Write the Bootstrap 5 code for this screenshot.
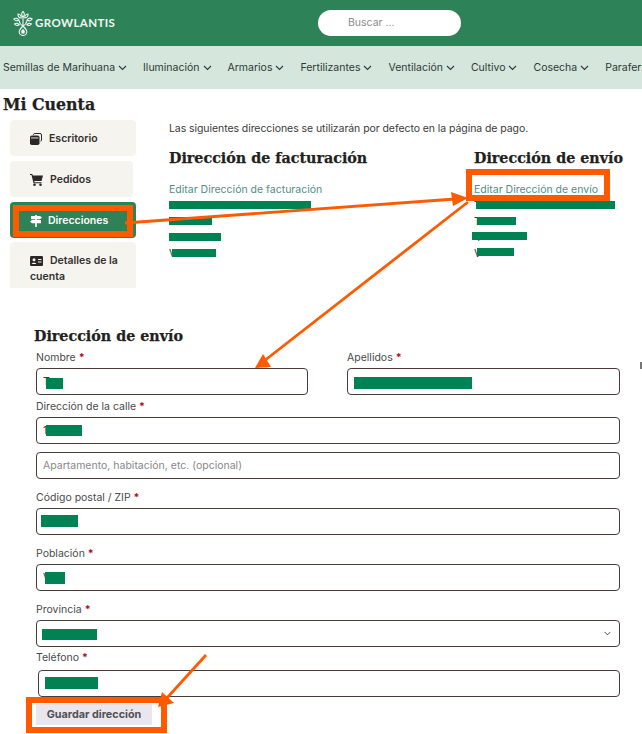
<!DOCTYPE html>
<html lang="es">
<head>
    <meta charset="UTF-8">
    <meta name="viewport" content="width=device-width, initial-scale=1.0">
    <title>Mi Cuenta - Growlantis</title>
    <link href="https://cdn.jsdelivr.net/npm/bootstrap@5.3.3/dist/css/bootstrap.min.css" rel="stylesheet">
    <style>
        html, body { overflow: hidden; }
        body {
            position: relative;
            height: 734px;
            font-family: "Inter", "Liberation Sans", sans-serif;
            font-size: 10.5px;
            line-height: 16px;
            color: #3d3a3a;
            background: #fff;
        }
        .top-bar { height: 46px; background: #2e8257; padding-left: 13px; }
        .logo-text { width: 83px; margin-left: 2px; color: #f2f7f4; font-family: "Lato", sans-serif; font-weight: 700; font-size: 11.5px; letter-spacing: .4px; }
        .search-pill { width: 143px; height: 26px; margin-left: 200px; padding-left: 30px; background: #fff; border-radius: 13px; color: #8d8d8d; line-height: 26px; }
        .menu-bar { height: 43px; background: #d5e6dc; padding-left: 3px; gap: 16px; white-space: nowrap; overflow: hidden; }
        .menu-bar a { color: #2f3a36; text-decoration: none; font-size: 10.5px; }
        .menu-bar svg { margin-left: 3px; }
        .serif-title { margin: 0; font-family: "DejaVu Serif", "Liberation Serif", serif; font-weight: 700; color: #231f1c; -webkit-text-stroke: .25px #231f1c; }
        .page-title { font-size: 15.8px; line-height: 22px; margin: 5px 0 4px 3px; }
        .side-menu { width: 126px; margin-left: 10px; gap: 5px; }
        .side-item { height: 36px; padding: 2px 0 0 20px; background: #f5f4ef; border-radius: 4px; color: #34302e; font-weight: 600; }
        .side-item svg { margin-right: 7px; flex: none; }
        .side-narrow { width: 123px; }
        .side-active { background: #2e8257; color: #fff; }
        .side-active svg { margin-right: 6px; }
        .side-tall { display: block; height: 46px; padding: 11px 0 0 20px; border-radius: 4px 4px 0 0; margin-top: -1px; }
        .side-tall svg { vertical-align: -2px; margin-right: 7px; }
        .side-tall span { display: block; }
        .account-main { margin-left: 33px; padding-top: 1px; }
        .intro-line { letter-spacing: -.07px; }
        .address-box { width: 305px; }
        .address-box + .address-box { width: 150px; }
        .section-title { font-size: 14.3px; line-height: 20px; margin: 11px 0 14px; white-space: nowrap; }
        .edit-link { color: #4e8f86; text-decoration: none; display: block; }
        .form-box { margin: 37px 22px 0 36px; }
        .form-heading { font-size: 14.3px; line-height: 22px; margin: 0 0 3px -2px; }
        .field-label { display: block; height: 14px; line-height: 16px; margin: 0 0 4px; color: #4a4a4a; }
        .field-label b { color: #a80f22; font-weight: 700; }
        .field-input.form-control, .field-input.form-select {
            height: 27px; min-height: 0; padding: 0 6px; font-size: 10.5px; line-height: 25px;
            color: #3d3a3a; border: 1px solid #4a3a3a; border-radius: 4px;
        }
        .field-input.form-select { background-size: 9px 7px; background-position: right 7px center; }
        .field-input::placeholder { color: #888; }
        .form-gap { gap: 39px; margin-bottom: 4px; }
        .form-half { flex: 0 0 272px; }
        .gap-sm { margin-bottom: 8px; }
        .gap-md { margin-bottom: 11px; }
        .gap-xs { margin-bottom: 3px; }
        .phone-label { margin-bottom: 6px; }
        .phone-input { width: 582px; margin: 0 0 7px 2px; }
        .save-btn.btn { width: 116px; height: 21px; padding: 0; font-size: 10.8px; font-weight: 700; line-height: 21px; color: #515151; background: #e9e6ed; border: 0; border-radius: 0; }
        .mark-layer { position: absolute; top: 0; left: 0; pointer-events: none; }
    </style>
</head>
<body>

<!-- Header -->
<header class="top-bar d-flex align-items-center">
    <svg width="20" height="26" viewBox="0 0 20 26" fill="none" stroke="#f2f7f4" stroke-width="1.1">
        <path d="M10 1.5c1.8 1.6 1.8 4 0 5.6-1.8-1.6-1.8-4 0-5.6zM5 4c2.2.2 3.4 1.8 3.2 4C6 7.800 4.800 6.200 5 4zM15 4c-2.200.2-3.400 1.800-3.200 4 2.200-.2 3.400-1.800 3.200-4zM.8 9c1.800-1.200 4-.8 5.200 1-1.800 1.200-4 .8-5.200-1zM19.200 9c-1.800-1.200-4-.8-5.200 1 1.800 1.200 4 .8 5.200-1zM1.500 14c1.600-1.200 3.600-.8 4.700.8-1.600 1.200-3.600.8-4.700-.8zM18.500 14c-1.600-1.200-3.600-.8-4.700.8 1.600 1.200 3.600.8 4.700-.8z"/>
        <path d="M10 7v8M6 10.500c.5 3 2 4.500 4 5.500 2-1 3.500-2.500 4-5.500"/>
        <path d="M10 16c2.500 2.500 3.800 4 3.800 5.700a3.800 3.800 0 0 1-7.600 0C6.200 20 7.500 18.500 10 16z"/>
        <path d="M10 19c1.200 1.200 1.900 2 1.900 2.900a1.900 1.900 0 0 1-3.800 0c0-.9.700-1.700 1.900-2.900z" fill="#f2f7f4" stroke="none"/>
    </svg>
    <span class="logo-text">GROWLANTIS</span>
    <div class="search-pill">Buscar ...</div>
</header>

<!-- Menu -->
<nav class="menu-bar d-flex align-items-center">
    <a href="#">Semillas de Marihuana<svg width="9" height="6" viewBox="0 0 9 6" fill="none" stroke="#2f3a36" stroke-width="1.100"><path d="M1 1l3.500 3.500L8 1"/></svg></a>
    <a href="#">Iluminación<svg width="9" height="6" viewBox="0 0 9 6" fill="none" stroke="#2f3a36" stroke-width="1.100"><path d="M1 1l3.500 3.500L8 1"/></svg></a>
    <a href="#">Armarios<svg width="9" height="6" viewBox="0 0 9 6" fill="none" stroke="#2f3a36" stroke-width="1.100"><path d="M1 1l3.500 3.500L8 1"/></svg></a>
    <a href="#">Fertilizantes<svg width="9" height="6" viewBox="0 0 9 6" fill="none" stroke="#2f3a36" stroke-width="1.100"><path d="M1 1l3.500 3.500L8 1"/></svg></a>
    <a href="#">Ventilación<svg width="9" height="6" viewBox="0 0 9 6" fill="none" stroke="#2f3a36" stroke-width="1.100"><path d="M1 1l3.500 3.500L8 1"/></svg></a>
    <a href="#">Cultivo<svg width="9" height="6" viewBox="0 0 9 6" fill="none" stroke="#2f3a36" stroke-width="1.100"><path d="M1 1l3.500 3.500L8 1"/></svg></a>
    <a href="#">Cosecha<svg width="9" height="6" viewBox="0 0 9 6" fill="none" stroke="#2f3a36" stroke-width="1.100"><path d="M1 1l3.500 3.500L8 1"/></svg></a>
    <a href="#">Parafernalia</a>
</nav>

<h1 class="serif-title page-title">Mi Cuenta</h1>

<!-- Account -->
<div class="d-flex">
    <div class="side-menu d-flex flex-column flex-shrink-0">
        <div class="side-item d-flex align-items-center">
            <svg width="12" height="12" viewBox="0 0 12 12"><path d="M3.500 2V1.500A1.300 1.300 0 0 1 4.800.5H10a1.500 1.500 0 0 1 1.500 1.500v5a1.300 1.300 0 0 1-1 1.200" fill="none" stroke="#2b2726"/><rect y="2.500" width="9.500" height="9.500" rx="1.800" fill="#2b2726"/><rect x="1" y="4.500" width="7.500" height=".9" fill="#f5f4ef"/></svg>
            Escritorio
        </div>
        <div class="side-item side-narrow d-flex align-items-center">
            <svg width="13" height="12" viewBox="0 0 13 12" fill="#2b2726"><path d="M0 0h2.300l.5 1.500H13l-1.500 5.500H4.200l.3 1.200h7v1.100H3.500L1.500 1.100H0z"/><circle cx="4.500" cy="10.700" r="1.300"/><circle cx="10.500" cy="10.700" r="1.300"/></svg>
            Pedidos
        </div>
        <div class="side-item side-active d-flex align-items-center">
            <svg width="12" height="12" viewBox="0 0 12 12" fill="#fff"><rect x="5.200" width="1.600" height="12"/><path d="M1 1h9l2 1.600L10 4.200H1zM11 5H2L0 6.600 2 8.200h9z"/></svg>
            Direcciones
        </div>
        <div class="side-item side-tall">
            <svg width="13" height="10" viewBox="0 0 13 10"><rect width="13" height="10" rx="1.200" fill="#2b2726"/><circle cx="4" cy="3.700" r="1.500" fill="#f5f4ef"/><path d="M1.700 8c.2-1.700 4.400-1.700 4.600 0zM8 3h3.500v1H8zM8 5.500h3.500v1H8z" fill="#f5f4ef"/></svg>Detalles de la
            <span>cuenta</span>
        </div>
    </div>
    <div class="account-main">
        <div class="intro-line">Las siguientes direcciones se utilizarán por defecto en la página de pago.</div>
        <div class="d-flex">
            <div class="address-box">
                <h2 class="serif-title section-title">Dirección de facturación</h2>
                <a class="edit-link" href="#">Editar Dirección de facturación</a>
                <div>T</div>
                <div>T</div>
                <div>4</div>
                <div>V</div>
            </div>
            <div class="address-box">
                <h2 class="serif-title section-title">Dirección de envío</h2>
                <a class="edit-link" href="#">Editar Dirección de envío</a>
                <div>T</div>
                <div>T</div>
                <div>4</div>
                <div>V</div>
            </div>
        </div>
    </div>
</div>

<!-- Shipping address form -->
<form class="form-box">
    <h2 class="serif-title form-heading">Dirección de envío</h2>
    <div class="d-flex form-gap">
        <div class="form-half">
            <label class="field-label">Nombre <b>*</b></label>
            <input class="form-control field-input" type="text" value="T">
        </div>
        <div class="flex-fill">
            <label class="field-label">Apellidos <b>*</b></label>
            <input class="form-control field-input" type="text">
        </div>
    </div>
    <label class="field-label">Dirección de la calle <b>*</b></label>
    <input class="form-control field-input gap-sm" type="text" value="1">
    <input class="form-control field-input gap-md" type="text" placeholder="Apartamento, habitación, etc. (opcional)">
    <label class="field-label">Código postal / ZIP <b>*</b></label>
    <input class="form-control field-input gap-md" type="text">
    <label class="field-label">Población <b>*</b></label>
    <input class="form-control field-input gap-md" type="text" value="V">
    <label class="field-label">Provincia <b>*</b></label>
    <select class="form-select field-input gap-xs"><option></option></select>
    <label class="field-label phone-label">Teléfono <b>*</b></label>
    <input class="form-control field-input phone-input" type="text" value="6">
    <button class="btn save-btn" type="button">Guardar dirección</button>
</form>

<!-- Redaction bars and orange annotations drawn over the screenshot -->
<svg class="mark-layer" width="642" height="734" viewBox="0 0 642 734">
    <g fill="#008255">
        <rect x="169" y="201" width="142" height="8"/>
        <rect x="169" y="217" width="43" height="8"/>
        <rect x="169" y="233" width="52" height="8"/>
        <rect x="172" y="249" width="44" height="8"/>
        <rect x="476" y="201" width="139" height="8"/>
        <rect x="477" y="217" width="39" height="8"/>
        <rect x="472" y="232" width="55" height="8"/>
        <rect x="477" y="248" width="37" height="8"/>
        <rect x="46" y="378" width="17" height="11"/>
        <rect x="354" y="377" width="118" height="12"/>
        <rect x="46" y="425" width="36" height="11"/>
        <rect x="41" y="515" width="37" height="12"/>
        <rect x="45" y="572" width="20" height="12"/>
        <rect x="42" y="629" width="55" height="11"/>
        <rect x="45" y="677" width="53" height="12"/>
    </g>
    <g fill="none" stroke="#ff5a00" stroke-width="6">
        <rect x="16" y="208" width="114" height="26"/>
        <rect x="469" y="172" width="138" height="26"/>
        <rect x="29" y="700" width="135" height="30"/>
    </g>
    <g stroke="#ff5a00" stroke-width="2.800">
        <line x1="125" y1="223" x2="455" y2="199"/>
        <line x1="468" y1="202" x2="264" y2="361"/>
        <line x1="206" y1="655" x2="166" y2="699"/>
    </g>
    <g fill="#ff5a00">
        <path d="M468 198L451 192l2 14z"/>
        <path d="M255 368L263 354l8 13z"/>
        <path d="M158 707L162 692l12 11z"/>
    </g>
    <rect x="640" y="362" width="2" height="7" fill="#777"/>
</svg>

<script src="https://cdn.jsdelivr.net/npm/bootstrap@5.3.3/dist/js/bootstrap.bundle.min.js"></script>
</body>
</html>
